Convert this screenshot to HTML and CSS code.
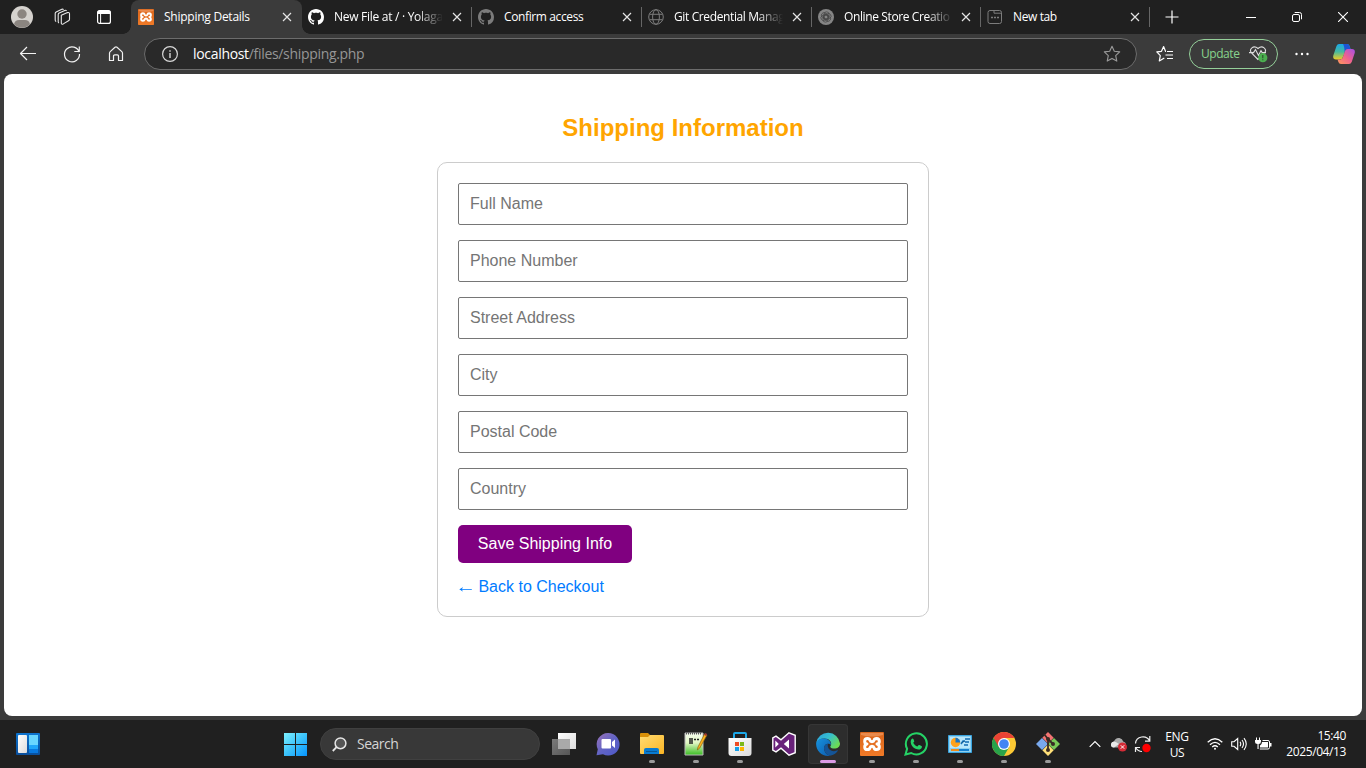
FILE: index.html
```html
<!DOCTYPE html>
<html lang="en">
<head>
<meta charset="utf-8">
<title>Shipping Details</title>
<link rel="stylesheet" href="styles.css">
</head>
<body>
<svg class="defs" width="0" height="0" aria-hidden="true">
  <defs>
    <linearGradient id="gXampp" x1="0" y1="0" x2="0" y2="1"><stop offset="0" stop-color="#d9651b"/><stop offset="1" stop-color="#f07a27"/></linearGradient>
    <linearGradient id="gWin" x1="0" y1="0" x2="1" y2="1"><stop offset="0" stop-color="#7df0ff"/><stop offset=".5" stop-color="#3cc3fb"/><stop offset="1" stop-color="#0594ff"/></linearGradient>
    <linearGradient id="gPane" x1="0" y1="0" x2="1" y2="1"><stop offset="0" stop-color="#ffffff"/><stop offset="1" stop-color="#dcdcdc"/></linearGradient>
    <linearGradient id="gBack" x1="0" y1="0" x2="1" y2="1"><stop offset="0" stop-color="#7a7a7a"/><stop offset="1" stop-color="#565656"/></linearGradient>
    <linearGradient id="gChat" x1="0" y1="0" x2="1" y2="1"><stop offset="0" stop-color="#9b72b8"/><stop offset=".5" stop-color="#6264c4"/><stop offset="1" stop-color="#4b57c8"/></linearGradient>
    <linearGradient id="gFolder" x1="0" y1="0" x2="1" y2="1"><stop offset="0" stop-color="#ffdc73"/><stop offset="1" stop-color="#fbb524"/></linearGradient>
    <linearGradient id="gNote" x1="0" y1="0" x2="0" y2="1"><stop offset="0" stop-color="#f6fbef"/><stop offset=".45" stop-color="#e0f6c2"/><stop offset="1" stop-color="#39bd22"/></linearGradient>
    <linearGradient id="gEdgeTop" x1="0" y1="0" x2="1" y2=".6"><stop offset="0" stop-color="#2b9fdb"/><stop offset=".5" stop-color="#35bed0"/><stop offset="1" stop-color="#6cdb53"/></linearGradient>
    <linearGradient id="gEdgeLow" x1="0" y1="0" x2="1" y2="1"><stop offset="0" stop-color="#1793df"/><stop offset="1" stop-color="#0d5bad"/></linearGradient>
    <linearGradient id="gPilotA" x1="0" y1="0" x2="0" y2="1"><stop offset="0" stop-color="#1aa8e8"/><stop offset=".5" stop-color="#46b9a0"/><stop offset="1" stop-color="#f0cc25"/></linearGradient>
    <linearGradient id="gPilotB" x1="1" y1="0" x2="0" y2="1"><stop offset="0" stop-color="#a64fe8"/><stop offset=".5" stop-color="#ee6190"/><stop offset="1" stop-color="#ff9c58"/></linearGradient>
    <linearGradient id="gWidget" x1="0" y1="0" x2="0" y2="1"><stop offset="0" stop-color="#0d74cf"/><stop offset="1" stop-color="#0a4f9c"/></linearGradient>
    <symbol id="xampp" viewBox="0 0 24 24">
      <rect width="24" height="24" rx="1" fill="url(#gXampp)"/>
      <path d="M1 1h22v2q-11 3-22 0z" fill="#f09a62" opacity=".7"/>
      <path d="M7.500 6.500Q4.700 6.500 4.700 9.200T7 12Q4.700 12.200 4.700 15T7.500 17.600Q9.500 17.600 9.900 15.800Q10.300 14.300 12 14.300T14.100 15.800Q14.500 17.600 16.500 17.600Q19.300 17.600 19.300 15T17 12Q19.300 11.800 19.300 9.200T16.500 6.500Q14.500 6.500 14.100 8.200Q13.700 9.700 12 9.700T9.900 8.200Q9.500 6.500 7.500 6.500z" fill="none" stroke="#fff" stroke-width="3" stroke-linejoin="round"/>
    </symbol>
    <symbol id="github" viewBox="0 0 16 16">
      <path d="M8 0C3.580 0 0 3.580 0 8c0 3.540 2.290 6.530 5.470 7.590.4.070.55-.17.55-.38 0-.19-.01-.82-.01-1.490-2.010.37-2.530-.49-2.690-.94-.09-.23-.48-.94-.82-1.130-.28-.15-.68-.52-.01-.53.63-.01 1.080.58 1.230.82.72 1.210 1.870.87 2.330.66.070-.52.28-.87.51-1.070-1.780-.2-3.640-.89-3.640-3.950 0-.87.31-1.590.82-2.150-.08-.2-.36-1.020.08-2.120 0 0 .67-.21 2.200.82.64-.18 1.320-.27 2-.27s1.360.09 2 .27c1.530-1.040 2.200-.82 2.200-.82.44 1.100.16 1.920.08 2.120.51.56.82 1.270.82 2.150 0 3.070-1.870 3.750-3.650 3.950.29.25.54.73.54 1.480 0 1.070-.01 1.930-.01 2.200 0 .21.15.46.55.38A8.010 8.010 0 0 0 16 8c0-4.420-3.580-8-8-8z" fill="currentColor"/>
    </symbol>
    <symbol id="close" viewBox="0 0 10 10"><path d="M1 1l8 8M9 1L1 9" fill="none" stroke="currentColor" stroke-width="1.200"/></symbol>
  </defs>
</svg>

<div class="window">
  <header class="tabbar">
    <div class="tabbar-start">
      <svg class="avatar" viewBox="0 0 22 22"><circle cx="11" cy="11" r="11" fill="#d5d2ce"/><circle cx="11" cy="8" r="4.700" fill="#8b8580"/><path d="M3 18.200Q4 14 8 14h6q4 0 5 4.200A11 11 0 0 1 3 18.200z" fill="#8b8580"/></svg>
      <svg class="spaces" viewBox="0 0 18 18" fill="none" stroke="#e8e8e8" stroke-width="1.100" stroke-linejoin="round"><path d="M8.300 7.200l6.200-2.600q2-.6 2 1.200v5.500q0 1-1 1.500l-5.200 3.100q-2 .9-2-1z"/><path d="M6 15q-.8-.4-.8-1.500V6.700q0-1.100 1-1.600l5.600-2.700q1.200-.4 1.700.6M3.200 13.500q-1-.5-1-1.600V5.500q0-1.100 1-1.600L8.800 1.200q1.200-.4 1.700.6"/></svg>
      <svg class="tabmenu" viewBox="0 0 16 16"><rect x="1.600" y="1.600" width="12.800" height="12.800" rx="2" fill="none" stroke="#fff" stroke-width="1.200"/><path d="M1.500 3q0-1.500 1.500-1.500h10q1.500 0 1.500 1.500v2h-13z" fill="#fff"/><path d="M4.600 5v9.400" stroke="#fff"/></svg>
    </div>
    <div class="tab tab-active"><svg class="favicon"><use href="#xampp"/></svg><span class="tab-title t-ship">Shipping Details</span><svg class="tab-close"><use href="#close"/></svg></div>
    <div class="tab"><svg class="favicon"><use href="#github"/></svg><span class="tab-title t-file fade">New File at / · Yolaga</span><svg class="tab-close"><use href="#close"/></svg></div>
    <div class="tab"><svg class="favicon dim"><use href="#github"/></svg><span class="tab-title t-conf">Confirm access</span><svg class="tab-close"><use href="#close"/></svg></div>
    <div class="tab"><svg class="favicon dim" viewBox="0 0 16 16" fill="none" stroke="currentColor"><circle cx="8" cy="8" r="7.300"/><ellipse cx="8" cy="8" rx="3.400" ry="7.300"/><path d="M1.500 5.300h13M1.500 10.700h13"/></svg><span class="tab-title t-git fade">Git Credential Manag</span><svg class="tab-close"><use href="#close"/></svg></div>
    <div class="tab tab-narrow"><svg class="favicon dim" viewBox="0 0 16 16"><circle cx="8" cy="8" r="8" fill="#858585"/><g fill="none" stroke="#444" stroke-width=".7"><rect x="6" y="2.800" width="5" height="7.500" rx="2.500"/><rect x="6" y="2.800" width="5" height="7.500" rx="2.500" transform="rotate(60 8 8)"/><rect x="6" y="2.800" width="5" height="7.500" rx="2.500" transform="rotate(120 8 8)"/><rect x="6" y="2.800" width="5" height="7.500" rx="2.500" transform="rotate(180 8 8)"/><rect x="6" y="2.800" width="5" height="7.500" rx="2.500" transform="rotate(240 8 8)"/><rect x="6" y="2.800" width="5" height="7.500" rx="2.500" transform="rotate(300 8 8)"/></g></svg><span class="tab-title t-shop fade">Online Store Creatio</span><svg class="tab-close"><use href="#close"/></svg></div>
    <div class="tab tab-narrow"><svg class="favicon dim" viewBox="0 0 16 16" fill="none" stroke="currentColor"><rect x="1" y="1.500" width="13.500" height="13" rx="2"/><path d="M7 1.500v2.700h7.500"/><path d="M4 8.500h2M7 8.500h2M10 8.500h2" stroke-width="1.600"/></svg><span class="tab-title t-new">New tab</span><svg class="tab-close"><use href="#close"/></svg></div>
    <svg class="newtab" viewBox="0 0 14 14"><path d="M7 .5v13M.5 7h13" stroke="#fff" stroke-width="1.200"/></svg>
    <div class="window-controls">
      <span><svg viewBox="0 0 10 10"><path d="M0 5.500h10" stroke="#fff"/></svg></span>
      <span><svg viewBox="0 0 10 10" fill="none" stroke="#fff"><rect x=".5" y="2.500" width="7" height="7" rx="1.500"/><path d="M2.700.5H7.500q2 0 2 2v4.800"/></svg></span>
      <span><svg viewBox="0 0 10 10"><path d="M0 0l10 10M10 0L0 10" stroke="#fff" stroke-width="1.100"/></svg></span>
    </div>
  </header>

  <nav class="toolbar">
    <div class="nav-buttons">
      <svg viewBox="0 0 20 20"><path d="M2.500 9.500H18M9 3L2.500 9.500 9 16"/></svg>
      <svg viewBox="0 0 20 20"><path d="M17.200 8.200A7.500 7.500 0 1 0 17.500 10M17.300 2.500v5h-5"/></svg>
      <svg viewBox="0 0 20 20"><path d="M3.500 9.200q0-1 .7-1.600L9 3.300q1-.8 2 0l4.800 4.300q.7.600.7 1.600v7.300h-4v-4.500q0-1.200-1.200-1.200H8.700q-1.200 0-1.200 1.200v4.500h-4z"/></svg>
    </div>
    <div class="address">
      <svg class="info" viewBox="0 0 16 16" fill="none" stroke="#d8d8d8"><circle cx="8" cy="8" r="7.400" stroke-width="1.200"/><path d="M8 7v5M8 4.200v1.500" stroke-width="1.400"/></svg>
      <span class="url"><span class="host">localhost</span>/files/shipping.php</span>
      <svg class="star" viewBox="0 0 18 18"><path d="M9 1.300l2.300 5 5.400.6-4 3.700 1.100 5.500L9 13.400l-4.800 2.700 1.100-5.500-4-3.700 5.400-.6z" fill="none" stroke="#9a9a9a" stroke-width="1.100" stroke-linejoin="round"/></svg>
    </div>
    <svg class="favorites" viewBox="0 0 18 18"><path d="M10 6.400H9.600L7.600 1.500 5.500 6.300.8 6.900l3.500 3.700-1 5.300 5-2.800M11 6.500h6M9.500 10H17M11 13.500h6" fill="none" stroke="#fff" stroke-width="1.200" stroke-linejoin="round"/></svg>
    <div class="update"><span>Update</span><svg viewBox="0 0 20 18"><path d="M9 14.500L2.500 8C-.5 4 4.500-.3 9 3.500c4.500-3.800 9.500.5 6.500 4.500L9 14.500zM0 7.600h4.500l2-3 3 6 2.500-5 1.200 2H17" fill="none" stroke="#ddd" stroke-width="1.100"/><circle cx="13.800" cy="12.700" r="4.600" fill="#4caf50"/><path d="M13.800 10v3.300M13.800 14.200v1" stroke="#294d2a" stroke-width="1.100"/></svg></div>
    <svg class="more" viewBox="0 0 14 4" fill="#fff"><circle cx="1.500" cy="2" r="1.200"/><circle cx="7" cy="2" r="1.200"/><circle cx="12.500" cy="2" r="1.200"/></svg>
    <svg class="copilot" viewBox="0 0 22 22"><path d="M6 1h8q2 0 2.600 2l.9 3h-2.700q-2 0-2.600 2L10 14q-.8 2.500-3.500 2.500H3Q-.5 16.500.3 12.500L3.500 3Q4.300 1 6 1z" fill="url(#gPilotA)"/><path d="M10 1h4q2 0 2.600 2l.9 3h-2.700q-2 0-2.600 2l-.6 1.500Q11.500 3 10 1z" fill="#1e55d4"/><path d="M16 21H8q-2 0-2.600-2l-.9-2.500h2.700q2 0 2.600-2L12 8q.8-2 2.800-2H19q3.500 0 2.700 4l-3 9q-.8 2-2.700 2z" fill="url(#gPilotB)"/></svg>
  </nav>

  <div class="viewport">
    <main class="page">
      <h2>Shipping Information</h2>
      <form class="shipping-form">
        <input type="text" placeholder="Full Name">
        <input type="text" placeholder="Phone Number">
        <input type="text" placeholder="Street Address">
        <input type="text" placeholder="City">
        <input type="text" placeholder="Postal Code">
        <input type="text" placeholder="Country">
        <button type="button">Save Shipping Info</button>
        <a href="#"><span class="arrow">←</span> Back to Checkout</a>
      </form>
    </main>
  </div>

  <footer class="taskbar">
    <div class="task-left"><svg class="widgets" viewBox="0 0 24 22"><rect width="24" height="22" rx="1" fill="url(#gWidget)"/><rect x="2" y="2" width="9" height="18" rx="1" fill="url(#gPane)"/><path d="M13 2h9v10h-9z" fill="#69d6ff"/><path d="M13 12h9v4h-9z" fill="#20a6fa"/><path d="M13 16h9v4h-9z" fill="#0879e0"/></svg></div>
    <svg class="start" viewBox="0 0 23 23"><path d="M0 0h11v11H0zM12 0h11v11H12zM0 12h11v11H0zM12 12h11v11H12z" fill="url(#gWin)"/></svg>
    <div class="search"><svg viewBox="0 0 15 15"><circle cx="8.500" cy="6.300" r="5.400" fill="#555" stroke="#e6e6e6" stroke-width="1.500"/><path d="M4.500 10.200L.8 14" stroke="#e6e6e6" stroke-width="1.800"/></svg><span>Search</span></div>
    <div class="apps">
      <span class="app"><svg viewBox="0 0 24 24"><path d="M6 1h18v16H6z" fill="url(#gPane)"/><path d="M0 7h18v16H0z" fill="url(#gBack)"/><path d="M6 7h12v10H6z" fill="#a9a9a9"/></svg></span>
      <span class="app"><svg viewBox="0 0 24 24"><path d="M12 1a11.300 11.300 0 1 1-5 21.300L.5 23.300l1.300-6A11.300 11.300 0 0 1 12 1z" fill="url(#gChat)"/><rect x="5.500" y="7" width="9.500" height="9.500" rx="1" fill="#fff"/><path d="M16 10l3-2.500v8.500l-3-2.500z" fill="#fff"/></svg></span>
      <span class="app running"><svg viewBox="0 0 24 24"><path d="M0 2q0-1 1-1h7l2 2v4H0z" fill="#d99008"/><path d="M0 5h8l2-2h13q1 0 1 1v17q0 1-1 1H1q-1 0-1-1z" fill="url(#gFolder)"/><path d="M4 18q0-2 2-2h11q2 0 2 2v4H4z" fill="#087bd1"/><path d="M6 19h11v1H6z" fill="#075794"/></svg></span>
      <span class="app running"><svg viewBox="0 0 24 24"><path d="M1 1h18v22H1z" fill="url(#gNote)" stroke="#b8b8b8"/><path d="M2 1.500h16" stroke="#555" stroke-width="2" stroke-dasharray="1 1"/><path d="M6 6v6M8 6v6M10 7.500h2M13 7.500h2" stroke="#222" stroke-width="1.500"/><path d="M20.500 2L14 15l-.7 3 2.500-2L23 3z" fill="#ffb21e" stroke="#8a6410" stroke-width=".7"/><path d="M21 1l2.200 1-1 2-2-1z" fill="#9e352e"/></svg></span>
      <span class="app running"><svg viewBox="0 0 24 24"><path d="M6 7V2q0-1 1-1h10q1 0 1 1v5" fill="none" stroke="#1ca8e8" stroke-width="2"/><path d="M.5 6h23v15q0 3-3 3h-17q-3 0-3-3z" fill="url(#gPane)"/><path d="M7 10h4v4H7z" fill="#ed4b23"/><path d="M12 10h4v4h-4z" fill="#7cb818"/><path d="M7 15h4v4H7z" fill="#139ee8"/><path d="M12 15h4v4h-4z" fill="#ffb500"/></svg></span>
      <span class="app"><svg viewBox="0 0 24 24"><path d="M17 .8l6.200 2.500v17.400L17 23.200l-8-7-5 3.700L.8 18.200V5.800L4 4.100l5 3.700z" fill="#68217a" stroke="#fff" stroke-width="1.400"/><path d="M3.300 8.500v7l3.500-3.500zM17 7.500v9L11.800 12z" fill="#fff"/></svg></span>
      <span class="app running current"><svg viewBox="0 0 24 24"><path d="M.2 11A12 12 0 0 1 24 11.500c0 4-3.500 5.500-7 5-3-.5-3-1.800-2.200-2.900C16.500 10 13 6.500 8.500 6.500 4.500 6.500 1.500 8.500.2 11z" fill="url(#gEdgeTop)"/><path d="M.1 12C0 8.500 4 6 8.500 6.500c4 .3 7 3.500 6.300 6.500C13 10.500 8 12 8 16c0 4 3 7.500 7 7.600C7 25.500.3 19.500.1 12z" fill="url(#gEdgeLow)"/><path d="M12 11.500C9.500 12 8 14 8 16c0 4 3 7.500 7 7.600 3-.7 5.500-2.500 7-5-.5-.8-.8-.3-1.500 0-5 2-10-2-8.500-7.100z" fill="#145497"/></svg></span>
      <span class="app running"><svg><use href="#xampp"/></svg></span>
      <span class="app running"><svg viewBox="0 0 24 24"><path d="M1.500 22.500l1.600-5.700A10.500 10.500 0 1 1 7.200 21z" fill="none" stroke="#25d366" stroke-width="2"/><path d="M7.400 7.200c.7-1 1.600-.8 2-.2l.8 1.900c.2.500-.2 1-1 1.900 1 1.900 2.300 3 4.200 3.800l1.300-1.500c.4-.4.900-.1 2.700.8.600.3.700.7.400 1.600-1 2.500-3.500 2.500-6.300 1.300C7.600 14.900 5.500 10 7.400 7.200z" fill="#25d366"/></svg></span>
      <span class="app running"><svg viewBox="0 0 24 24"><path d="M.5 3.500h23v17H.5z" fill="#8bd0f1" stroke="#39a4df"/><path d="M2 5h20v11H2z" fill="#b9e7fb"/><circle cx="7.500" cy="10.500" r="4.700" fill="#ffa21b"/><path d="M7.500 10.500V5.800a4.700 4.700 0 0 1 4.700 4.700z" fill="#1874c4"/><path d="M13 12l2-3h2M17 7h5M17 10h4M16 13h4" stroke="#126cb2" stroke-width="1.500"/><path d="M3 18h8" stroke="#ed8b19" stroke-width="2"/><path d="M11 18h10" stroke="#1680cf" stroke-width="2"/></svg></span>
      <span class="app running"><svg viewBox="0 0 24 24"><circle cx="12" cy="12" r="12" fill="#fcc934"/><path d="M12 12L1.600 6A12 12 0 0 0 12 24l5.200-9z" fill="#29a34a"/><path d="M1.600 6A12 12 0 0 1 22.400 6H12l-5.200 9z" fill="#ea4335"/><circle cx="12" cy="12" r="6" fill="#fff"/><circle cx="12" cy="12" r="4.800" fill="#4285f4"/></svg></span>
      <span class="app running"><svg viewBox="0 0 24 24"><path d="M12 0l5.700 5.700L12 11.400 6.300 5.700z" fill="#f37472"/><path d="M18 6l6 6-6 6-6-6z" fill="#79c858"/><path d="M12 12.500l5.700 5.700L12 24l-5.700-5.800z" fill="#ffe078"/><path d="M6 6l6 6-6 6-6-6z" fill="#79a9ee"/><path d="M8 2l4 5v11M12 7l5 5" fill="none" stroke="#392b25" stroke-width="1.800"/><circle cx="12" cy="7" r="2" fill="#392b25"/><circle cx="17" cy="12" r="2" fill="#392b25"/><circle cx="12" cy="18" r="2" fill="#392b25"/></svg></span>
    </div>
    <div class="tray">
      <svg class="chevron" viewBox="0 0 12 8"><path d="M.7 6.800L6 1.500l5.300 5.300" fill="none" stroke="#fff" stroke-width="1.200"/></svg>
      <svg class="cloud" viewBox="0 0 18 16"><path d="M4 11.500Q.5 11.300 1 8q.5-2.500 3-2.500Q5.500 1.300 9.500 2q3 .5 3.700 3.500 2.500.3 2.800 3 0 3-3 3z" fill="#aaa"/><path d="M1 8q.5-2.500 3-2.500 2 0 5 2.500l-5 3.500Q.5 11.300 1 8z" fill="#e8e8e8"/><circle cx="12.500" cy="11" r="4.500" fill="#d52b36"/><path d="M10.800 9.300l3.400 3.400m0-3.400l-3.400 3.400" stroke="#fff"/></svg>
      <svg class="sync" viewBox="0 0 18 18"><path d="M1.500 8.500C2 1 12.500-.5 15.800 6.200M15.800 1v5.200H11M1.500 17v-4.500H6M1.800 12.800Q4 16.500 8 16.500" fill="none" stroke="#eee" stroke-width="1.200"/><circle cx="12.500" cy="13" r="4.200" fill="#f00"/></svg>
      <div class="lang">ENG<br>US</div>
      <svg class="wifi" viewBox="0 0 16 14" fill="none" stroke="#fff" stroke-width="1.300"><path d="M.7 5.200Q8-1.600 15.300 5.200M3 7.700q5-4.600 10 0M5.200 10q2.800-2.500 5.600 0"/><circle cx="8" cy="11.800" r="1" fill="#fff" stroke="none"/></svg>
      <svg class="sound" viewBox="0 0 16 14" fill="none" stroke="#fff" stroke-width="1.100"><path d="M.7 4.700H3L6.700 1.500v11L3 9.300H.7zM9 4.800q1.500 2.200 0 4.400M11 3q3 4 0 8M13 1.200q4.500 5.800 0 11.600"/></svg>
      <svg class="battery" viewBox="0 0 17 14"><path d="M7.500 3.500H13q1.500 0 1.500 1.500v5.500q0 1.500-1.500 1.500H4.800" fill="none" stroke="#fff"/><path d="M7 5h6v5.500H5V8.500q2-1 2-3.500zM15 6h1.500v3.500H15z" fill="#fff"/><path d="M0 3h6v1.500Q6 7 3.600 7v5H2.500V7Q0 7 0 4.500zM1 .5h1V3H1zM4 .5h1V3H4z" fill="#fff"/></svg>
      <div class="clock">15:40<br>2025/04/13</div>
    </div>
  </footer>
</div>
</body>
</html>
```
FILE: styles.css
```css
* { box-sizing: border-box; }
body { margin: 0; overflow: hidden; font-family: "Open Sans", "Noto Sans", sans-serif; font-size: 12px; color: #fff; }
svg { display: block; flex: none; }
.defs { position: absolute; }
.window { width: 1366px; height: 768px; display: flex; flex-direction: column; background: #3b3b3b; }

.tabbar { height: 34px; display: flex; align-items: center; background: #202020; }
.tabbar-start { width: 131px; height: 34px; flex: none; display: flex; align-items: center; padding-left: 11px; }
.avatar { width: 22px; height: 22px; }
.spaces { width: 18px; height: 18px; margin-left: 20px; }
.tabmenu { width: 16px; height: 16px; margin-left: 25px; }
.tab { width: 170px; height: 34px; flex: none; display: flex; align-items: center; padding: 0 11px 0 6px; background: linear-gradient(#666, #666) right center / 1px 20px no-repeat; }
.tab-narrow { width: 169px; }
.tab-active { width: 171px; background: #3b3b3b; border-radius: 8px 8px 0 0; padding-left: 7px; position: relative; }
.tab-active::before, .tab-active::after { content: ""; position: absolute; bottom: 0; width: 8px; height: 8px; }
.tab-active::before { left: -8px; background: radial-gradient(circle at 0 0, #202020 7.5px, #3b3b3b 8px); }
.tab-active::after { right: -8px; background: radial-gradient(circle at 100% 0, #202020 7.5px, #3b3b3b 8px); }
.favicon { width: 16px; height: 16px; }
.dim { color: #7c7c7c; }
.tab-title { width: 109px; margin-left: 10px; overflow: hidden; white-space: nowrap; line-height: 18px; }
.fade { -webkit-mask-image: linear-gradient(90deg, #000 76%, transparent 100%); mask-image: linear-gradient(90deg, #000 76%, transparent 100%); }
.tab-close { width: 10px; height: 10px; margin-left: auto; margin-right: -1px; color: #e4e4e4; }
.t-ship { letter-spacing: -.25px; }
.t-file { letter-spacing: -.28px; }
.t-conf { letter-spacing: -.38px; }
.t-git, .t-shop, .t-new { letter-spacing: -.38px; }
.newtab { width: 14px; height: 14px; margin-left: 15px; }
.window-controls { display: flex; margin-left: auto; }
.window-controls span { width: 46px; display: grid; place-items: center; }
.window-controls svg { width: 10px; height: 10px; }

.toolbar { height: 40px; display: flex; align-items: center; flex: none; }
.nav-buttons { width: 144px; flex: none; display: flex; gap: 24px; padding-left: 18px; }
.nav-buttons svg { width: 20px; height: 20px; fill: none; stroke: #f2f2f2; stroke-width: 1.2; stroke-linejoin: round; }
.address { width: 993px; height: 32px; flex: none; border: 1px solid #6c6c6c; border-radius: 16px; background: #292929; display: flex; align-items: center; padding: 0 15px 0 17px; }
.info { width: 16px; height: 16px; }
.url { margin-left: 15px; font-size: 14px; line-height: 20px; letter-spacing: -.32px; color: #969696; }
.host { color: #fff; }
.star { width: 18px; height: 18px; margin-left: auto; }
.favorites { width: 18px; height: 18px; margin-left: 19px; }
.update { width: 89px; height: 30px; margin-left: 15px; border: 1px solid #95d09a; border-radius: 15px; display: flex; align-items: center; padding-left: 11px; color: #88d38d; letter-spacing: -.45px; }
.update span { width: 39px; line-height: 16px; padding-bottom: 1px; }
.update svg { width: 20px; height: 18px; margin-left: 9px; }
.more { width: 14px; height: 4px; margin-left: 17px; }
.copilot { width: 22px; height: 22px; margin-left: 24px; }

.viewport { height: 646px; flex: none; padding: 0 4px 4px; }
.page { height: 642px; background: #fff; border-radius: 8px; padding-top: 40px; font-family: "Liberation Sans", Arial, sans-serif; }
.page h2 { margin: 0 0 20px; font-size: 24px; line-height: 28px; color: orange; text-align: center; }
.shipping-form { width: 492px; margin: 0 auto; border: 1px solid #ccc; border-radius: 10px; padding: 20px; display: flex; flex-direction: column; align-items: flex-start; gap: 15px; }
.shipping-form input { width: 100%; height: 42px; margin: 0; border: 1px solid #767676; border-radius: 2px; padding: 10px 11px; font: 16px "Liberation Sans", Arial, sans-serif; }
.shipping-form input::placeholder { color: #757575; opacity: 1; }
.shipping-form button { width: 174px; height: 38px; border: 0; border-radius: 5px; padding: 0; background: purple; color: #fff; font: 16px "Liberation Sans", Arial, sans-serif; }
.shipping-form a { color: #007bff; font-size: 16px; line-height: 18px; text-decoration: none; }
.arrow { display: inline-block; transform: scaleX(1.3); }

.taskbar { height: 48px; flex: none; background: #202020; display: flex; align-items: center; }
.task-left { width: 284px; padding-left: 16px; }
.widgets { width: 24px; height: 22px; }
.start { width: 23px; height: 23px; margin-top: 1px; }
.search { width: 220px; height: 32px; margin-left: 13px; border-radius: 16px; border: 1px solid #404040; background: #383838; display: flex; align-items: center; gap: 10px; padding-left: 11px; font-size: 14px; letter-spacing: -.5px; color: #d5d5d5; }
.search svg { width: 15px; height: 15px; }
.search span { line-height: 18px; padding-bottom: 1px; }
.apps { display: flex; margin-left: 4px; gap: 4px; }
.app { width: 40px; height: 40px; display: grid; place-items: center; position: relative; border-radius: 4px; }
.app svg { width: 24px; height: 24px; }
.running::after { content: ""; position: absolute; left: 17px; bottom: 1px; width: 6px; height: 3px; border-radius: 2px; background: #9a9a9a; }
.current { background: #2d2d2d; box-shadow: inset 0 0 0 1px #363636; }
.current::after { left: 12px; width: 16px; background: #dc9be5; }
.tray { display: flex; align-items: center; flex: 1; padding-right: 20px; }
.chevron { width: 12px; height: 8px; margin-left: 21px; }
.cloud { width: 18px; height: 16px; margin-left: 9px; }
.sync { width: 18px; height: 18px; margin-left: 6px; }
.lang { width: 30px; margin-left: 10px; padding-top: 2px; text-align: center; line-height: 16px; letter-spacing: -.3px; }
.wifi { width: 16px; height: 14px; margin-left: 15px; }
.sound { width: 16px; height: 14px; margin-left: 8px; }
.battery { width: 17px; height: 14px; margin-left: 8px; }
.clock { margin-left: auto; text-align: right; line-height: 16px; letter-spacing: -.4px; white-space: nowrap; }
```
